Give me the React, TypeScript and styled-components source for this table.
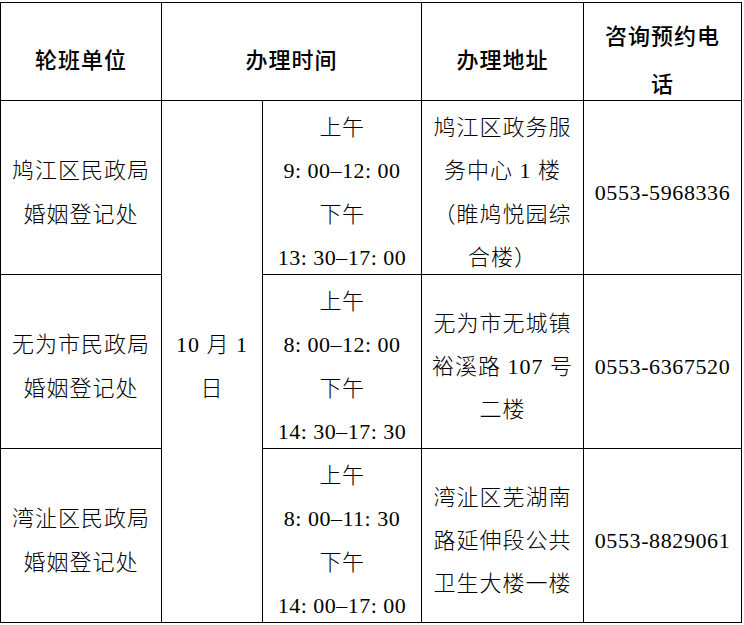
import React from "react";
import styled, { createGlobalStyle } from "styled-components";

const GlobalStyle = createGlobalStyle`
  html, body {
    margin: 0;
    padding: 0;
    background: #fff;
  }
  body {
    font-family: "Liberation Serif", "Noto Sans CJK SC", serif;
    color: #000;
  }
`;

const Page = styled.div`
  padding-top: 2px;
`;

const Table = styled.table`
  border-collapse: collapse;
  table-layout: fixed;
  width: 741px;
`;

const Col = styled.col<{ $w: number }>`
  width: ${(p) => p.$w}px;
`;

const HeadCell = styled.th`
  border: 1px solid #000;
  padding: 0 6px;
  font-family: "Noto Sans CJK SC", sans-serif;
  font-weight: 500;
  font-size: 22px;
  letter-spacing: 1px;
  text-align: center;
  vertical-align: top;
`;

// fixed-height box, content centred a little below the middle
const HeadInner = styled.div`
  box-sizing: border-box;
  height: 97px;
  padding-top: 12px;
  display: flex;
  flex-direction: column;
  justify-content: center;
  line-height: 48px;
`;

const Cell = styled.td<{ $spacing?: number }>`
  border: 1px solid #000;
  padding: 0 4px;
  font-size: 22px;
  font-weight: 300;
  letter-spacing: ${(p) => p.$spacing ?? 1}px;
  text-align: center;
  vertical-align: top;
  white-space: nowrap;
`;

const BodyInner = styled.div<{ $h?: number }>`
  box-sizing: border-box;
  height: ${(p) => p.$h ?? 173}px;
  padding-top: 10px;
  display: flex;
  flex-direction: column;
  justify-content: center;
  line-height: 43.3px;
`;

const Line = styled.div`
  display: block;
`;

type Office = {
  name: string[];
  time: string[];
  address: string[];
  phone: string;
};

const offices: Office[] = [
  {
    name: ["鸠江区民政局", "婚姻登记处"],
    time: ["上午", "9: 00–12: 00", "下午", "13: 30–17: 00"],
    address: ["鸠江区政务服", "务中心 1 楼", "（睢鸠悦园综", "合楼）"],
    phone: "0553-5968336",
  },
  {
    name: ["无为市民政局", "婚姻登记处"],
    time: ["上午", "8: 00–12: 00", "下午", "14: 30–17: 30"],
    address: ["无为市无城镇", "裕溪路 107 号", "二楼"],
    phone: "0553-6367520",
  },
  {
    name: ["湾沚区民政局", "婚姻登记处"],
    time: ["上午", "8: 00–11: 30", "下午", "14: 00–17: 00"],
    address: ["湾沚区芜湖南", "路延伸段公共", "卫生大楼一楼"],
    phone: "0553-8829061",
  },
];

const Lines = ({ items }: { items: string[] }) => (
  <>
    {items.map((t, i) => (
      <Line key={i}>{t}</Line>
    ))}
  </>
);

export default function App() {
  return (
    <Page>
      <GlobalStyle />
      <Table>
        <colgroup>
          <Col $w={161} />
          <Col $w={101} />
          <Col $w={159} />
          <Col $w={162} />
          <Col $w={158} />
        </colgroup>
        <thead>
          <tr>
            <HeadCell>
              <HeadInner>轮班单位</HeadInner>
            </HeadCell>
            <HeadCell colSpan={2}>
              <HeadInner>办理时间</HeadInner>
            </HeadCell>
            <HeadCell>
              <HeadInner>办理地址</HeadInner>
            </HeadCell>
            <HeadCell>
              <HeadInner>
                <Lines items={["咨询预约电", "话"]} />
              </HeadInner>
            </HeadCell>
          </tr>
        </thead>
        <tbody>
          {offices.map((o, i) => (
            <tr key={o.phone}>
              <Cell>
                <BodyInner>
                  <Lines items={o.name} />
                </BodyInner>
              </Cell>
              {i === 0 && (
                <Cell rowSpan={3}>
                  <BodyInner $h={521}>
                    <Lines items={["10 月 1", "日"]} />
                  </BodyInner>
                </Cell>
              )}
              <Cell $spacing={0.5}>
                <BodyInner>
                  <Lines items={o.time} />
                </BodyInner>
              </Cell>
              <Cell>
                <BodyInner>
                  <Lines items={o.address} />
                </BodyInner>
              </Cell>
              <Cell $spacing={0.6}>
                <BodyInner>{o.phone}</BodyInner>
              </Cell>
            </tr>
          ))}
        </tbody>
      </Table>
    </Page>
  );
}
